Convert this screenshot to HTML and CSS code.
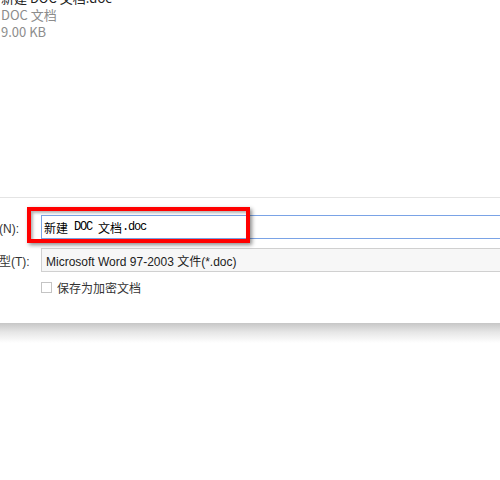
FILE: index.html
```html
<!DOCTYPE html>
<html lang="zh-CN">
<head>
<meta charset="utf-8">
<link rel="stylesheet" href="styles.css">
</head>
<body>
<div class="dialog">
  <div class="top">
    <div class="info">
      <div class="name">新建 DOC 文档.doc</div>
      <div class="meta">DOC 文档</div>
      <div class="meta">9.00 KB</div>
    </div>
  </div>
  <div class="form">
    <div class="label">文件名(N):</div>
    <div class="input"><span class="cjk">新建</span> DOC <span class="cjk">文档</span>.doc</div>
    <div class="label">文件类型(T):</div>
    <div class="select">Microsoft Word 97-2003 文件(*.doc)</div>
    <div class="label"></div>
    <label class="check"><span class="box"></span>保存为加密文档</label>
  </div>
  <div class="highlight"></div>
</div>
<div class="shadow"></div>
</body>
</html>
```

FILE: styles.css
```css
html, body {
  margin: 0;
  padding: 0;
  background: #ffffff;
  overflow: hidden;
}
body {
  width: 500px;
  height: 480px;
  font-family: "Noto Sans CJK SC", "Noto Sans", sans-serif;
  color: #333;
}
.dialog {
  position: relative;
  height: 323px;
  background: #fff;
}
.top {
  display: flex;
  flex-direction: column;
  height: 198px;
  box-sizing: border-box;
  border-bottom: 1px solid #e4e4e4;
}
.info {
  margin-top: -11px;
  padding-left: 1px;
  font-size: 13px;
  line-height: 17px;
}
.name { color: #222; }
.meta { color: #8c8c8c; }
.form {
  display: grid;
  grid-template-columns: 78px 470px;
  row-gap: 9px;
  margin-left: -37px;
  padding-top: 17px;
  font-size: 12px;
}
.label {
  display: flex;
  align-items: center;
  white-space: nowrap;
  color: #333;
  font-family: "Liberation Sans", "Noto Sans CJK SC", sans-serif;
  font-size: 12px;
}
.input {
  height: 24px;
  box-sizing: border-box;
  border: 1px solid #7aa3e6;
  background: #fff;
  display: flex;
  align-items: center;
  padding-left: 2px;
  font-family: "Liberation Mono", "DejaVu Sans Mono", monospace;
  font-size: 12px;
  letter-spacing: -1.2px;
  white-space: pre;
  color: #000;
}
.input .cjk {
  font-family: "Noto Sans CJK SC", sans-serif;
  font-size: 12px;
  letter-spacing: 0;
}
.select {
  height: 24px;
  box-sizing: border-box;
  border: 1px solid #d0d0d0;
  background: #f7f7f7;
  display: flex;
  align-items: center;
  padding-left: 4px;
  font-family: "Liberation Sans", "Noto Sans CJK SC", sans-serif;
  font-size: 12px;
  color: #222;
}
.check {
  display: flex;
  align-items: center;
  gap: 5px;
  margin-top: -2px;
  font-size: 12px;
  color: #333;
}
.box {
  width: 11px;
  height: 11px;
  box-sizing: border-box;
  border: 1px solid #c4c4c4;
  background: #fff;
}
.highlight {
  position: absolute;
  left: 27px;
  top: 207px;
  width: 223px;
  height: 36px;
  box-sizing: border-box;
  border: 4px solid #ff0000;
  box-shadow: 2px 2px 4px rgba(0, 0, 0, 0.45), inset 2px 2px 3px rgba(0, 0, 0, 0.3);
}
.shadow {
  height: 20px;
  background: linear-gradient(#c6c6c6, #e6e6e6 45%, #ffffff);
}
```
